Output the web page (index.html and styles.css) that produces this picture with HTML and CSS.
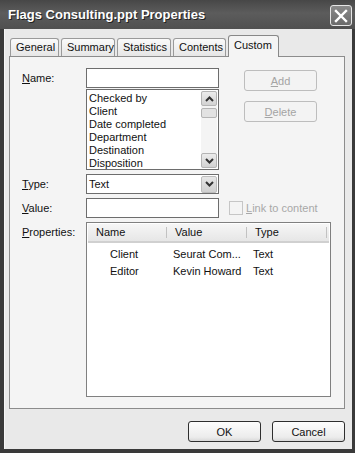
FILE: index.html
```html
<!DOCTYPE html>
<html lang="en">
<head>
  <meta charset="UTF-8">
  <title>Flags Consulting.ppt Properties</title>
  <link rel="stylesheet" href="styles.css">
</head>
<body>
  <div class="window">
    <div class="titlebar">
      <span class="title">Flags Consulting.ppt Properties</span>
      <div class="close">
        <svg width="14" height="14" viewBox="0 0 14 14">
          <path d="M2 2 L12 12 M12 2 L2 12" stroke="#fff" stroke-width="2.4" stroke-linecap="square"/>
        </svg>
      </div>
    </div>

    <div class="client">
      <div class="tabs">
        <div class="tab">General</div>
        <div class="tab">Summary</div>
        <div class="tab">Statistics</div>
        <div class="tab">Contents</div>
        <div class="tab active">Custom</div>
      </div>

      <div class="panel">
        <div class="top-area">
          <div class="label name-label"><u>N</u>ame:</div>
          <div class="field-col">
            <div class="textbox"></div>
            <div class="listbox">
              <div class="list-items">
                <div>Checked by</div>
                <div>Client</div>
                <div>Date completed</div>
                <div>Department</div>
                <div>Destination</div>
                <div>Disposition</div>
              </div>
              <div class="scrollbar">
                <div class="sb-btn">
                  <svg width="9" height="6" viewBox="0 0 9 6"><path d="M1 5 L4.5 1.5 L8 5" fill="none" stroke="#333" stroke-width="2"/></svg>
                </div>
                <div class="sb-thumb"></div>
                <div class="sb-track"></div>
                <div class="sb-btn">
                  <svg width="9" height="6" viewBox="0 0 9 6"><path d="M1 1 L4.5 4.5 L8 1" fill="none" stroke="#333" stroke-width="2"/></svg>
                </div>
              </div>
            </div>
          </div>
          <div class="side-buttons">
            <div class="btn disabled"><u>A</u>dd</div>
            <div class="btn disabled"><u>D</u>elete</div>
          </div>
        </div>

        <div class="row">
          <div class="label"><u>T</u>ype:</div>
          <div class="select">
            <span>Text</span>
            <div class="drop-btn">
              <svg width="9" height="6" viewBox="0 0 9 6"><path d="M1 1 L4.5 4.5 L8 1" fill="none" stroke="#333" stroke-width="2"/></svg>
            </div>
          </div>
        </div>

        <div class="row">
          <div class="label"><u>V</u>alue:</div>
          <div class="textbox"></div>
          <div class="check">
            <span class="box"></span>
            <span><u>L</u>ink to content</span>
          </div>
        </div>

        <div class="row props-row">
          <div class="label props-label"><u>P</u>roperties:</div>
          <div class="listview">
            <div class="lv-header">
              <div class="col c-name">Name</div>
              <div class="col c-value">Value</div>
              <div class="col c-type">Type</div>
            </div>
            <div class="lv-row">
              <div class="cell c-name indent">Client</div>
              <div class="cell c-value">Seurat Com...</div>
              <div class="cell c-type">Text</div>
            </div>
            <div class="lv-row">
              <div class="cell c-name indent">Editor</div>
              <div class="cell c-value">Kevin Howard</div>
              <div class="cell c-type">Text</div>
            </div>
          </div>
        </div>
      </div>

      <div class="footer">
        <div class="btn dialog">OK</div>
        <div class="btn dialog">Cancel</div>
      </div>
    </div>
  </div>
</body>
</html>
```

FILE: styles.css
```css
html, body {
  margin: 0;
  padding: 0;
  width: 355px;
  height: 453px;
  overflow: hidden;
  font-family: 'Liberation Sans', Arial, sans-serif;
  font-size: 11px;
  color: #111;
}

.window {
  width: 355px;
  height: 453px;
  box-sizing: border-box;
  background: #3a3a3a;
  padding: 0 3px 4px 4px;
  display: flex;
  flex-direction: column;
}

.titlebar {
  height: 29px;
  display: flex;
  align-items: center;
  justify-content: space-between;
  background: linear-gradient(#474747, #5c5c5c 45%, #505050);
  margin: 0 -3px 0 -4px;
  padding: 0 3px 0 8px;
}

.title {
  color: #fff;
  font-weight: bold;
  font-size: 13px;
  text-shadow: 1px 1px 0 #222;
}

.close {
  width: 20px;
  height: 19px;
  border: 1px solid #e6e6e6;
  border-radius: 3px;
  background: linear-gradient(#8a8a8a, #6a6a6a);
  display: flex;
  align-items: center;
  justify-content: center;
  margin-top: 2px;
}

.client {
  flex: 1;
  background: #e9e9e9;
  border-left: 1px solid #f6f6f6;
  padding: 7px 7px 0 4px;
  display: flex;
  flex-direction: column;
}

.tabs {
  display: flex;
  align-items: flex-end;
  height: 20px;
  padding-left: 1px;
  gap: 2px;
}

.tab {
  height: 17px;
  line-height: 17px;
  padding: 0 5px;
  border: 1px solid #9a9a9a;
  border-bottom: none;
  border-radius: 3px 3px 0 0;
  background: linear-gradient(#fafafa, #e6e6e6);
}

.tab:nth-child(1) { width: 37px; }
.tab:nth-child(2) { width: 42px; }
.tab:nth-child(3) { width: 42px; }
.tab:nth-child(4) { width: 41px; }

.tab.active {
  width: 39px;
  height: 21px;
  line-height: 18px;
  background: #f4f4f4;
  border-color: #888;
  margin-bottom: -1px;
  position: relative;
  z-index: 1;
}

.panel {
  border: 1px solid #8c8c8c;
  background: #f4f4f4;
  height: 353px;
  box-sizing: border-box;
  padding: 11px 12px 11px 12px;
  display: flex;
  flex-direction: column;
  gap: 4px;
}

.label {
  width: 64px;
  flex-shrink: 0;
}

.top-area {
  display: flex;
}

.name-label {
  line-height: 20px;
}

.field-col {
  display: flex;
  flex-direction: column;
  gap: 1px;
}

.textbox {
  width: 133px;
  height: 20px;
  box-sizing: border-box;
  border: 1px solid #6d6d6d;
  background: #fff;
}

.listbox {
  width: 133px;
  height: 81px;
  box-sizing: border-box;
  border: 1px solid #6d6d6d;
  background: #fff;
  display: flex;
  justify-content: space-between;
}

.list-items {
  padding: 2px 0 0 2px;
  line-height: 13px;
}

.scrollbar {
  width: 16px;
  margin: 1px;
  display: flex;
  flex-direction: column;
  background: #f4f4f4;
}

.sb-btn {
  height: 15px;
  border: 1px solid #b4b4b4;
  border-radius: 2px;
  background: linear-gradient(#ececec, #d2d2d2);
  display: flex;
  align-items: center;
  justify-content: center;
  box-sizing: border-box;
}

.sb-thumb {
  height: 8px;
  margin-top: 2px;
  border: 1px solid #b4b4b4;
  border-radius: 2px;
  background: #e2e2e2;
}

.sb-track {
  flex: 1;
}

.side-buttons {
  margin-left: 25px;
  padding-top: 2px;
  display: flex;
  flex-direction: column;
  gap: 10px;
}

.btn {
  width: 73px;
  height: 21px;
  box-sizing: border-box;
  border: 1px solid #2e2e2e;
  border-radius: 3px;
  background: linear-gradient(#fdfdfd, #ececec 80%, #d8d8d8);
  display: flex;
  align-items: center;
  justify-content: center;
}

.btn.disabled {
  border-color: #bdbdbd;
  color: #a4a4a4;
  background: #f3f3f3;
}

.row {
  display: flex;
  align-items: center;
}

.select {
  width: 133px;
  height: 20px;
  box-sizing: border-box;
  border: 1px solid #6d6d6d;
  background: #fff;
  display: flex;
  align-items: center;
  justify-content: space-between;
  padding: 0 1px 0 2px;
}

.drop-btn {
  width: 16px;
  height: 17px;
  box-sizing: border-box;
  border: 1px solid #bcbcbc;
  border-radius: 2px;
  background: linear-gradient(#e6e6e6, #cfcfcf);
  display: flex;
  align-items: center;
  justify-content: center;
}

.check {
  margin-left: 10px;
  display: flex;
  align-items: center;
  gap: 3px;
  color: #a8a8a8;
}

.check .box {
  width: 12px;
  height: 12px;
  border: 1px solid #c6c6c6;
  background: #f4f4f4;
}

.props-row {
  align-items: flex-start;
}

.props-label {
  padding-top: 4px;
}

.listview {
  width: 245px;
  height: 175px;
  box-sizing: border-box;
  border: 1px solid #808080;
  background: #fff;
  padding: 1px;
}

.lv-header {
  display: flex;
  height: 17px;
  background: linear-gradient(#f6f6f6, #e6e6e6);
  border-bottom: 2px solid #d0d0d0;
}

.col {
  line-height: 17px;
  padding-left: 8px;
  box-sizing: border-box;
  position: relative;
}

.col::after {
  content: '';
  position: absolute;
  right: 0;
  top: 3px;
  height: 11px;
  border-right: 1px solid #c2c2c2;
}

.c-name { width: 79px; }
.c-value { width: 80px; }
.c-type { width: 80px; }

.lv-row {
  display: flex;
  height: 17px;
  line-height: 17px;
}

.cell {
  padding-left: 6px;
  box-sizing: border-box;
  white-space: nowrap;
}

.cell.indent {
  padding-left: 22px;
}

.lv-header + .lv-row {
  margin-top: 3px;
}

.footer {
  flex: 1;
  display: flex;
  justify-content: flex-end;
  align-items: flex-start;
  padding-top: 12px;
  gap: 11px;
}

.btn.dialog {
  width: 73px;
  height: 21px;
}
```
